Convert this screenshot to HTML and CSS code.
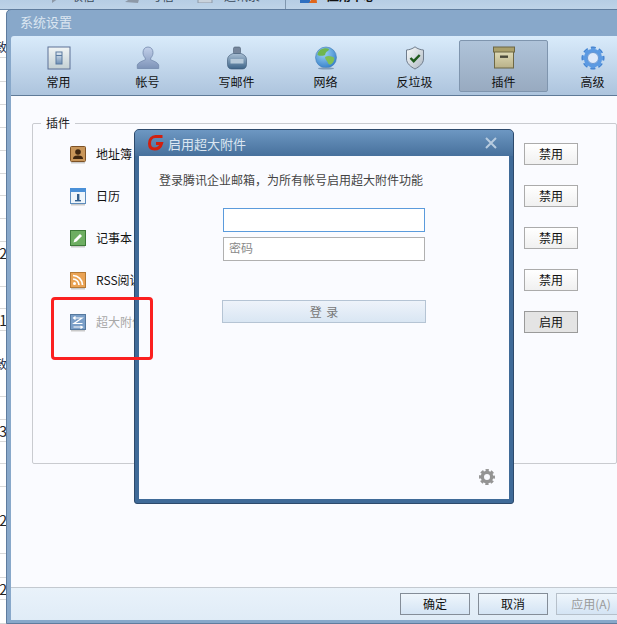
FILE: index.html
```html
<!DOCTYPE html>
<html lang="zh">
<head>
<meta charset="utf-8">
<title>系统设置</title>
<link rel="stylesheet" href="styles.css">
</head>
<body>
<div class="desktop">
  <div class="app-bar">
    <span class="app-tool t1"><svg width="14" height="14" viewBox="0 0 14 14"><path d="M2 0 L12 7 L2 14Z" fill="#8d99a8"/></svg><b>收信</b></span>
    <span class="app-tool t2"><svg width="18" height="14" viewBox="0 0 18 14"><path d="M1 13 L17 3 L14 14Z" fill="#8d99a8"/></svg><b>写信</b></span>
    <span class="app-tool t3"><svg width="20" height="14" viewBox="0 0 20 14"><rect x="3" y="0" width="14" height="14" fill="#c9d2dc" stroke="#8d99a8"/></svg><b>通讯录</b></span>
    <i class="app-sep"></i>
    <span class="app-tool t4"><svg width="18" height="14" viewBox="0 0 18 14"><rect x="1" y="0" width="10" height="14" fill="#2f6fc0"/><path d="M10 14 L17 4 L18 14Z" fill="#e0661c"/></svg><b class="strong">应用中心</b></span>
  </div>

  <div class="mail-list">
    <div class="cell"></div>
    <div class="cell">致</div><div class="cell"></div><div class="cell"></div><div class="cell"></div><div class="cell"></div><div class="cell"></div><div class="cell"></div><div class="cell"></div><div class="cell"></div>
    <div class="cell num">2</div><div class="cell"></div><div class="cell num">1</div>
    <div class="cell low">致</div><div class="cell"></div><div class="cell num">3</div><div class="cell"></div><div class="cell"></div>
    <div class="cell num low">2</div><div class="cell"></div><div class="cell num">2</div><div class="cell"></div>
  </div>

  <section class="settings">
    <header class="settings-title">系统设置</header>
    <nav class="toolbar">
      <div class="tool">
        <svg class="tool-icon" width="24" height="24" viewBox="0 0 24 24">
          <defs>
            <linearGradient id="swBg" x1="0" y1="0" x2="0" y2="1"><stop offset="0" stop-color="#f1f5f6"/><stop offset="1" stop-color="#c3d0d4"/></linearGradient>
            <linearGradient id="swIn" x1="0" y1="0" x2="0" y2="1"><stop offset="0" stop-color="#e6eef5"/><stop offset="1" stop-color="#6d8fb5"/></linearGradient>
          </defs>
          <rect x="1" y="1" width="22" height="22" fill="url(#swBg)" stroke="#5c7196"/>
          <rect x="9" y="6" width="6" height="12" fill="url(#swIn)" stroke="#5a7aa0"/>
          <path d="M9 9.5H15" stroke="#5a7aa0"/>
        </svg>
        <span>常用</span>
      </div>
      <div class="tool">
        <svg class="tool-icon" width="24" height="24" viewBox="0 0 24 24">
          <defs><linearGradient id="man" x1="0" y1="0" x2="0" y2="1"><stop offset="0" stop-color="#c2d0ea"/><stop offset="1" stop-color="#7d93b8"/></linearGradient></defs>
          <path d="M12 1c3.400 0 5 2.700 5 5.600 0 2.200-1 4.200-2.300 5.400v1.800c2.600 1.200 7 2.400 8 5.200v3.500H1.300v-3.500c1-2.800 5.400-4 8-5.200V12C8 10.800 7 8.800 7 6.600 7 3.700 8.600 1 12 1Z" fill="url(#man)" stroke="#7489ac" stroke-width=".8"/>
        </svg>
        <span>帐号</span>
      </div>
      <div class="tool">
        <svg class="tool-icon" width="24" height="24" viewBox="0 0 24 24">
          <defs><linearGradient id="ink" x1="0" y1="0" x2="0" y2="1"><stop offset="0" stop-color="#a9bfd4"/><stop offset="1" stop-color="#3d6488"/></linearGradient></defs>
          <rect x="8.500" y="1" width="7" height="7" rx="1.500" fill="#76869c" stroke="#4a5a70" stroke-width=".6"/>
          <path d="M8 7.500h8c3 1 5.500 3 5.500 6v5c0 2.500-1.500 4.500-4 4.500h-11c-2.500 0-4-2-4-4.500v-5c0-3 2.500-5 5.500-6Z" fill="url(#ink)" stroke="#3a5672" stroke-width=".6"/>
          <rect x="5.500" y="13" width="13" height="4.500" fill="#b6c9d9"/>
        </svg>
        <span>写邮件</span>
      </div>
      <div class="tool">
        <svg class="tool-icon" width="24" height="24" viewBox="0 0 24 24">
          <defs><radialGradient id="sea" cx=".4" cy=".3" r=".8"><stop offset="0" stop-color="#9fd4f5"/><stop offset="1" stop-color="#2a78c6"/></radialGradient></defs>
          <circle cx="12" cy="11.500" r="10.500" fill="url(#sea)" stroke="#3f7bb5" stroke-width=".6"/>
          <path d="M6 4c3-2 7-2.500 9-1 0 2-2 2-3 3.500-1 1 0 2.500-2 3C8 10 5 10 3.500 9 3.500 7 4.500 5.500 6 4Z" fill="#6fb64f"/>
          <path d="M11 11c3-1.500 6-1 9 .5 1 2-.5 5-2.500 6.500-1.500 1-3 .5-3.500-1-.5-2-3-3.500-3-6Z" fill="#7fbf55"/>
          <ellipse cx="12" cy="22.500" rx="8" ry="1" fill="#7f9bb8"/>
        </svg>
        <span>网络</span>
      </div>
      <div class="tool">
        <svg class="tool-icon" width="24" height="24" viewBox="0 0 24 24">
          <defs><linearGradient id="sh" x1="0" y1="0" x2="1" y2="1"><stop offset="0" stop-color="#fafcfc"/><stop offset="1" stop-color="#aeb8c2"/></linearGradient></defs>
          <path d="M12 .8c2.500 2 5.500 3 8.500 3.200v9c0 4.500-4.500 8-8.500 10-4-2-8.500-5.500-8.500-10V4C6.500 3.800 9.500 2.800 12 .8Z" fill="url(#sh)" stroke="#6f7c8c"/>
          <path d="M7.500 12l3.200 3.200 6-6.200" fill="none" stroke="#1f5a1d" stroke-width="2.400"/>
        </svg>
        <span>反垃圾</span>
      </div>
      <div class="tool active">
        <svg class="tool-icon" width="24" height="24" viewBox="0 0 22 24">
          <defs><linearGradient id="bx" x1="0" y1="0" x2="0" y2="1"><stop offset="0" stop-color="#e0dcb9"/><stop offset="1" stop-color="#b9b188"/></linearGradient></defs>
          <rect x="1.500" y="5" width="19" height="17" fill="url(#bx)" stroke="#6d6745"/>
          <rect x=".5" y="1" width="21" height="5" fill="#a99f6b" stroke="#6d6745"/>
          <rect x="7" y="9.500" width="8" height="2.400" fill="#4b4a3a"/>
        </svg>
        <span>插件</span>
      </div>
      <div class="tool">
        <svg class="tool-icon" width="24" height="24" viewBox="0 0 24 24">
          <circle cx="12" cy="12" r="7.500" fill="#dfeafa" stroke="#5c9ae2" stroke-width="3.500"/>
          <circle cx="12" cy="12" r="10" fill="none" stroke="#5c9ae2" stroke-width="3" stroke-dasharray="4.800 3.050" stroke-dashoffset="2.400"/>
          <circle cx="12" cy="12" r="10.800" fill="none" stroke="#3b76c0" stroke-width=".7" stroke-dasharray="4.800 3.680" stroke-dashoffset="2.400"/>
          <circle cx="12" cy="12" r="5.500" fill="#dfeafa" stroke="#3b76c0" stroke-width=".7"/>
        </svg>
        <span>高级</span>
      </div>
    </nav>

    <div class="settings-body">
      <div class="group">
        <span class="group-label">插件</span>
        <div class="plugin">
          <svg class="plugin-icon" width="16" height="18" viewBox="0 0 16 18"><rect x=".5" y=".5" width="15" height="15" rx="1" fill="#c8965a" stroke="#7d5226"/><circle cx="8" cy="6" r="2.800" fill="#3d2510"/><path d="M3 13c0-3 2.500-3.500 5-3.500s5 .5 5 3.500Z" fill="#3d2510"/><rect x="1" y="16" width="14" height="1.500" fill="#c9c9c9"/></svg>
          <span class="plugin-name">地址簿</span>
          <button class="pill">禁用</button>
        </div>
        <div class="plugin">
          <svg class="plugin-icon" width="16" height="18" viewBox="0 0 16 18"><rect x=".5" y=".5" width="15" height="15" fill="#eef5fb" stroke="#5d8cbc"/><rect x="0" y="0" width="16" height="4" fill="#4a90d8"/><rect x="7" y="6" width="2.400" height="7" fill="#33608f"/><rect x="5" y="12" width="6" height="1.400" fill="#33608f"/><rect x="1" y="16" width="14" height="1.500" fill="#c9c9c9"/></svg>
          <span class="plugin-name">日历</span>
          <button class="pill">禁用</button>
        </div>
        <div class="plugin">
          <svg class="plugin-icon" width="16" height="18" viewBox="0 0 16 18"><rect x=".5" y=".5" width="15" height="15" fill="#6eae62" stroke="#3d7a38"/><path d="M3.500 12.500l1-3 5.500-5.500 2 2-5.500 5.500Z" fill="#fff"/><rect x="1" y="16" width="14" height="1.500" fill="#c9c9c9"/></svg>
          <span class="plugin-name">记事本</span>
          <button class="pill">禁用</button>
        </div>
        <div class="plugin">
          <svg class="plugin-icon" width="16" height="18" viewBox="0 0 16 18"><rect x=".5" y=".5" width="15" height="15" fill="#eaa355" stroke="#b57a35"/><circle cx="4.500" cy="11.500" r="1.500" fill="#fff"/><path d="M3 7a6 6 0 0 1 6 6M3 3.500A9.500 9.500 0 0 1 12.500 13" fill="none" stroke="#fff" stroke-width="1.700"/><rect x="1" y="16" width="14" height="1.500" fill="#c9c9c9"/></svg>
          <span class="plugin-name">RSS阅读</span>
          <button class="pill">禁用</button>
        </div>
        <div class="plugin off">
          <svg class="plugin-icon" width="16" height="18" viewBox="0 0 16 18"><rect x=".5" y=".5" width="15" height="15" fill="#7b9fc8" stroke="#56799f"/><path d="M3.500 4H12L4 9.500h8.500M5.500 2.500L3.500 4l2 1.500M10.500 12L12.500 13l-2 1.500M3.500 13h9" fill="none" stroke="#fff" stroke-width="1.200"/><rect x="1" y="16" width="14" height="1.500" fill="#c9c9c9"/></svg>
          <span class="plugin-name">超大附件</span>
          <button class="pill pill-on">启用</button>
        </div>
      </div>
    </div>

    <footer class="settings-foot">
      <button class="foot-btn">确定</button>
      <button class="foot-btn">取消</button>
      <button class="foot-btn disabled">应用(A)</button>
    </footer>
  </section>

  <section class="dialog">
    <header class="dialog-title">
      <svg class="dialog-logo" width="16" height="16" viewBox="0 0 16 16"><path d="M14.500 1.500H7.500C4 1.500 1.500 4.500 1.500 8.500c0 3.500 2 5.500 5 5.500 3.500 0 6-2 7-5.500H8" fill="none" stroke="#d2200f" stroke-width="3"/></svg>
      <span class="dialog-name">启用超大附件</span>
      <svg class="dialog-close" width="12" height="12" viewBox="0 0 12 12"><path d="M1 1L11 11M11 1L1 11" stroke="#b7cbdf" stroke-width="2"/></svg>
    </header>
    <div class="dialog-body">
      <p class="dialog-desc">登录腾讯企业邮箱，为所有帐号启用超大附件功能</p>
      <div class="form">
        <input class="field focus" type="text" value="" aria-label="帐号">
        <input class="field" type="text" placeholder="密码">
        <button class="login">登 录</button>
      </div>
      <svg class="dialog-gear" width="16" height="16" viewBox="0 0 24 24">
        <circle cx="12" cy="12" r="7" fill="none" stroke="#949494" stroke-width="5"/>
        <circle cx="12" cy="12" r="10" fill="none" stroke="#949494" stroke-width="4" stroke-dasharray="4.800 3.050" stroke-dashoffset="2.400"/>
      </svg>
    </div>
  </section>

  <div class="highlight"></div>
</div>
</body>
</html>
```

FILE: styles.css
```css
* { box-sizing: border-box; }
html, body { margin: 0; padding: 0; background: #fff; }
body, button, input {
  font-family: "Noto Sans CJK SC", "Liberation Sans", sans-serif;
  font-size: 12px;
}
.desktop { position: relative; width: 617px; height: 624px; overflow: hidden; background: #fff; }

/* background application */
.app-bar {
  height: 10px;
  display: flex;
  align-items: flex-end;
  position: relative;
  overflow: hidden;
  background: linear-gradient(#b6cde4, #bed3e8);
  border-bottom: 1px solid #6f8aa8;
}
.app-tool { position: absolute; bottom: 6px; display: flex; align-items: flex-end; color: #3a4a5a; }
.app-tool b { font-weight: 400; line-height: 14px; }
.app-tool .strong { color: #111; font-weight: 700; }
.t1 { left: 50px; gap: 7px; }
.t2 { left: 124px; gap: 8px; }
.t3 { left: 195px; gap: 9px; }
.t4 { left: 299px; gap: 10px; }
.app-sep { position: absolute; left: 285px; top: 0; width: 1px; height: 9px; background: #7f96ae; }

.mail-list {
  position: absolute; left: 0; top: 0; width: 7px; height: 624px;
  display: grid;
  grid-template-rows: 36px 22px 24px 23px 23px 23px 23px 22px 23px 23px 45px 22px 22px 66px 23px 22px 22px 23px 67px 24px 22px 24px;
  padding: 0;
  z-index: 0;
}
.mail-list .cell:first-child { border-bottom: 0; }
.cell {
  border-bottom: 1px solid #d9d9d9;
  overflow: hidden;
  line-height: 22px;
  font-size: 12px;
  color: #1c2a44;
  white-space: nowrap;
  direction: rtl;
}
.num { font-size: 14px; color: #222; }
.low { padding-top: 22px; }

/* settings window */
.settings {
  position: absolute; left: 6px; top: 9px;
  width: 640px; height: 615px;
  display: flex; flex-direction: column;
  background: #88a8ca;
  border: 1px solid #5f7c9e;
  border-radius: 5px 5px 0 0;
  padding: 0 4px 3px 4px;
  z-index: 1;
}
.settings-title {
  height: 26px; flex: none;
  line-height: 24px;
  padding-left: 9px;
  font-size: 13px;
  color: #dbe6f1;
}
.toolbar {
  height: 60px; flex: none;
  display: flex;
  align-items: flex-start;
  padding: 4px 0 0 3px;
  background: linear-gradient(#d9ebfb, #adc4dd);
  border-bottom: 1px solid #5f7a98;
  border-radius: 3px 3px 0 0;
}
.tool {
  width: 89px; height: 52px; flex: none;
  display: flex; flex-direction: column; align-items: center;
  padding-top: 5px;
  border: 1px solid transparent;
  color: #111;
  line-height: 16px;
}
.tool-icon { flex: none; margin-bottom: 4px; }
.tool.active {
  background: linear-gradient(#afc3d9, #98aac0);
  border-color: #7f95ae;
  border-radius: 2px;
}
.settings-body { flex: 1; background: #fafbff; padding: 27px 24px 0 21px; }
.group {
  position: relative;
  height: 341px;
  border: 1px solid #c9cbd0;
  border-radius: 2px;
  padding-top: 9px;
}
.group-label {
  position: absolute; left: 8px; top: -10px;
  padding: 0 5px;
  background: #fafbff;
  line-height: 17px;
  color: #222;
}
.plugin { height: 42px; display: flex; align-items: center; padding: 0 38px 0 37px; color: #111; }
.plugin-icon { flex: none; margin-top: 2px; }
.plugin-name { margin-left: 10px; flex: 1; position: relative; top: -1px; }
.plugin.off .plugin-name { color: #a8a8a8; }
.pill {
  width: 54px; height: 22px; padding: 0;
  border: 1px solid #ababab;
  background: linear-gradient(#fff, #f0f0f0);
  color: #111;
  line-height: 20px;
  font-size: 12px;
}
.pill-on { background: #e4e4e4; border-color: #9a9a9a; }
.settings-foot {
  height: 33px; flex: none;
  display: flex; align-items: flex-start; justify-content: flex-end; gap: 8px;
  padding: 5px 15px 0 0;
  background: linear-gradient(#e9f2fa, #e0ecf7);
  border-top: 1px solid #c3c9d0;
}
.foot-btn {
  width: 70px; height: 22px; padding: 0;
  border: 1px solid #848d98;
  background: linear-gradient(#eff6fc, #d4e4f4);
  color: #111;
  line-height: 20px;
}
.foot-btn.disabled { border-color: #b6c0ca; color: #9a9a9a; }

/* dialog */
.dialog {
  position: absolute; left: 134px; top: 129px;
  width: 380px; height: 375px;
  display: flex; flex-direction: column;
  background: #3f6a98;
  border: 1px solid #2d4a6c;
  border-radius: 5px 5px 3px 3px;
  padding: 0 4px 4px;
  z-index: 2;
}
.dialog-title {
  height: 26px; flex: none;
  margin: 0 -4px;
  padding: 0 16px 0 13px;
  display: flex; align-items: center;
  background: linear-gradient(#6d97c2, #47709c);
  border-radius: 4px 4px 0 0;
  color: #dbe6f1;
}
.dialog-name { margin-left: 4px; font-size: 13px; flex: 1; }
.dialog-body { position: relative; flex: 1; background: #fafbff; }
.dialog-desc { margin: 0; padding: 15px 0 0 20px; line-height: 18px; color: #444; }
.form { display: flex; flex-direction: column; align-items: center; padding-top: 19px; }
.field {
  width: 202px; height: 24px; padding: 0 5px 3px;
  border: 1px solid #b0b0b0;
  background: #fff;
  outline: 0;
  margin-bottom: 5px;
  color: #333;
}
.field::placeholder { color: #8a8a8a; opacity: 1; }
.field.focus { border-color: #5b9bdc; }
.login {
  width: 204px; height: 23px; padding: 0;
  margin-top: 34px;
  border: 1px solid #b5c4d4;
  background: linear-gradient(#eef3fa, #d9e6f3);
  color: #777;
  line-height: 21px;
  word-spacing: 2px;
}
.dialog-gear { position: absolute; right: 14px; bottom: 14px; }

.highlight {
  position: absolute; left: 51px; top: 297px;
  width: 102px; height: 63px;
  border: 3px solid #fb2020;
  border-radius: 4px;
  z-index: 3;
}
```
